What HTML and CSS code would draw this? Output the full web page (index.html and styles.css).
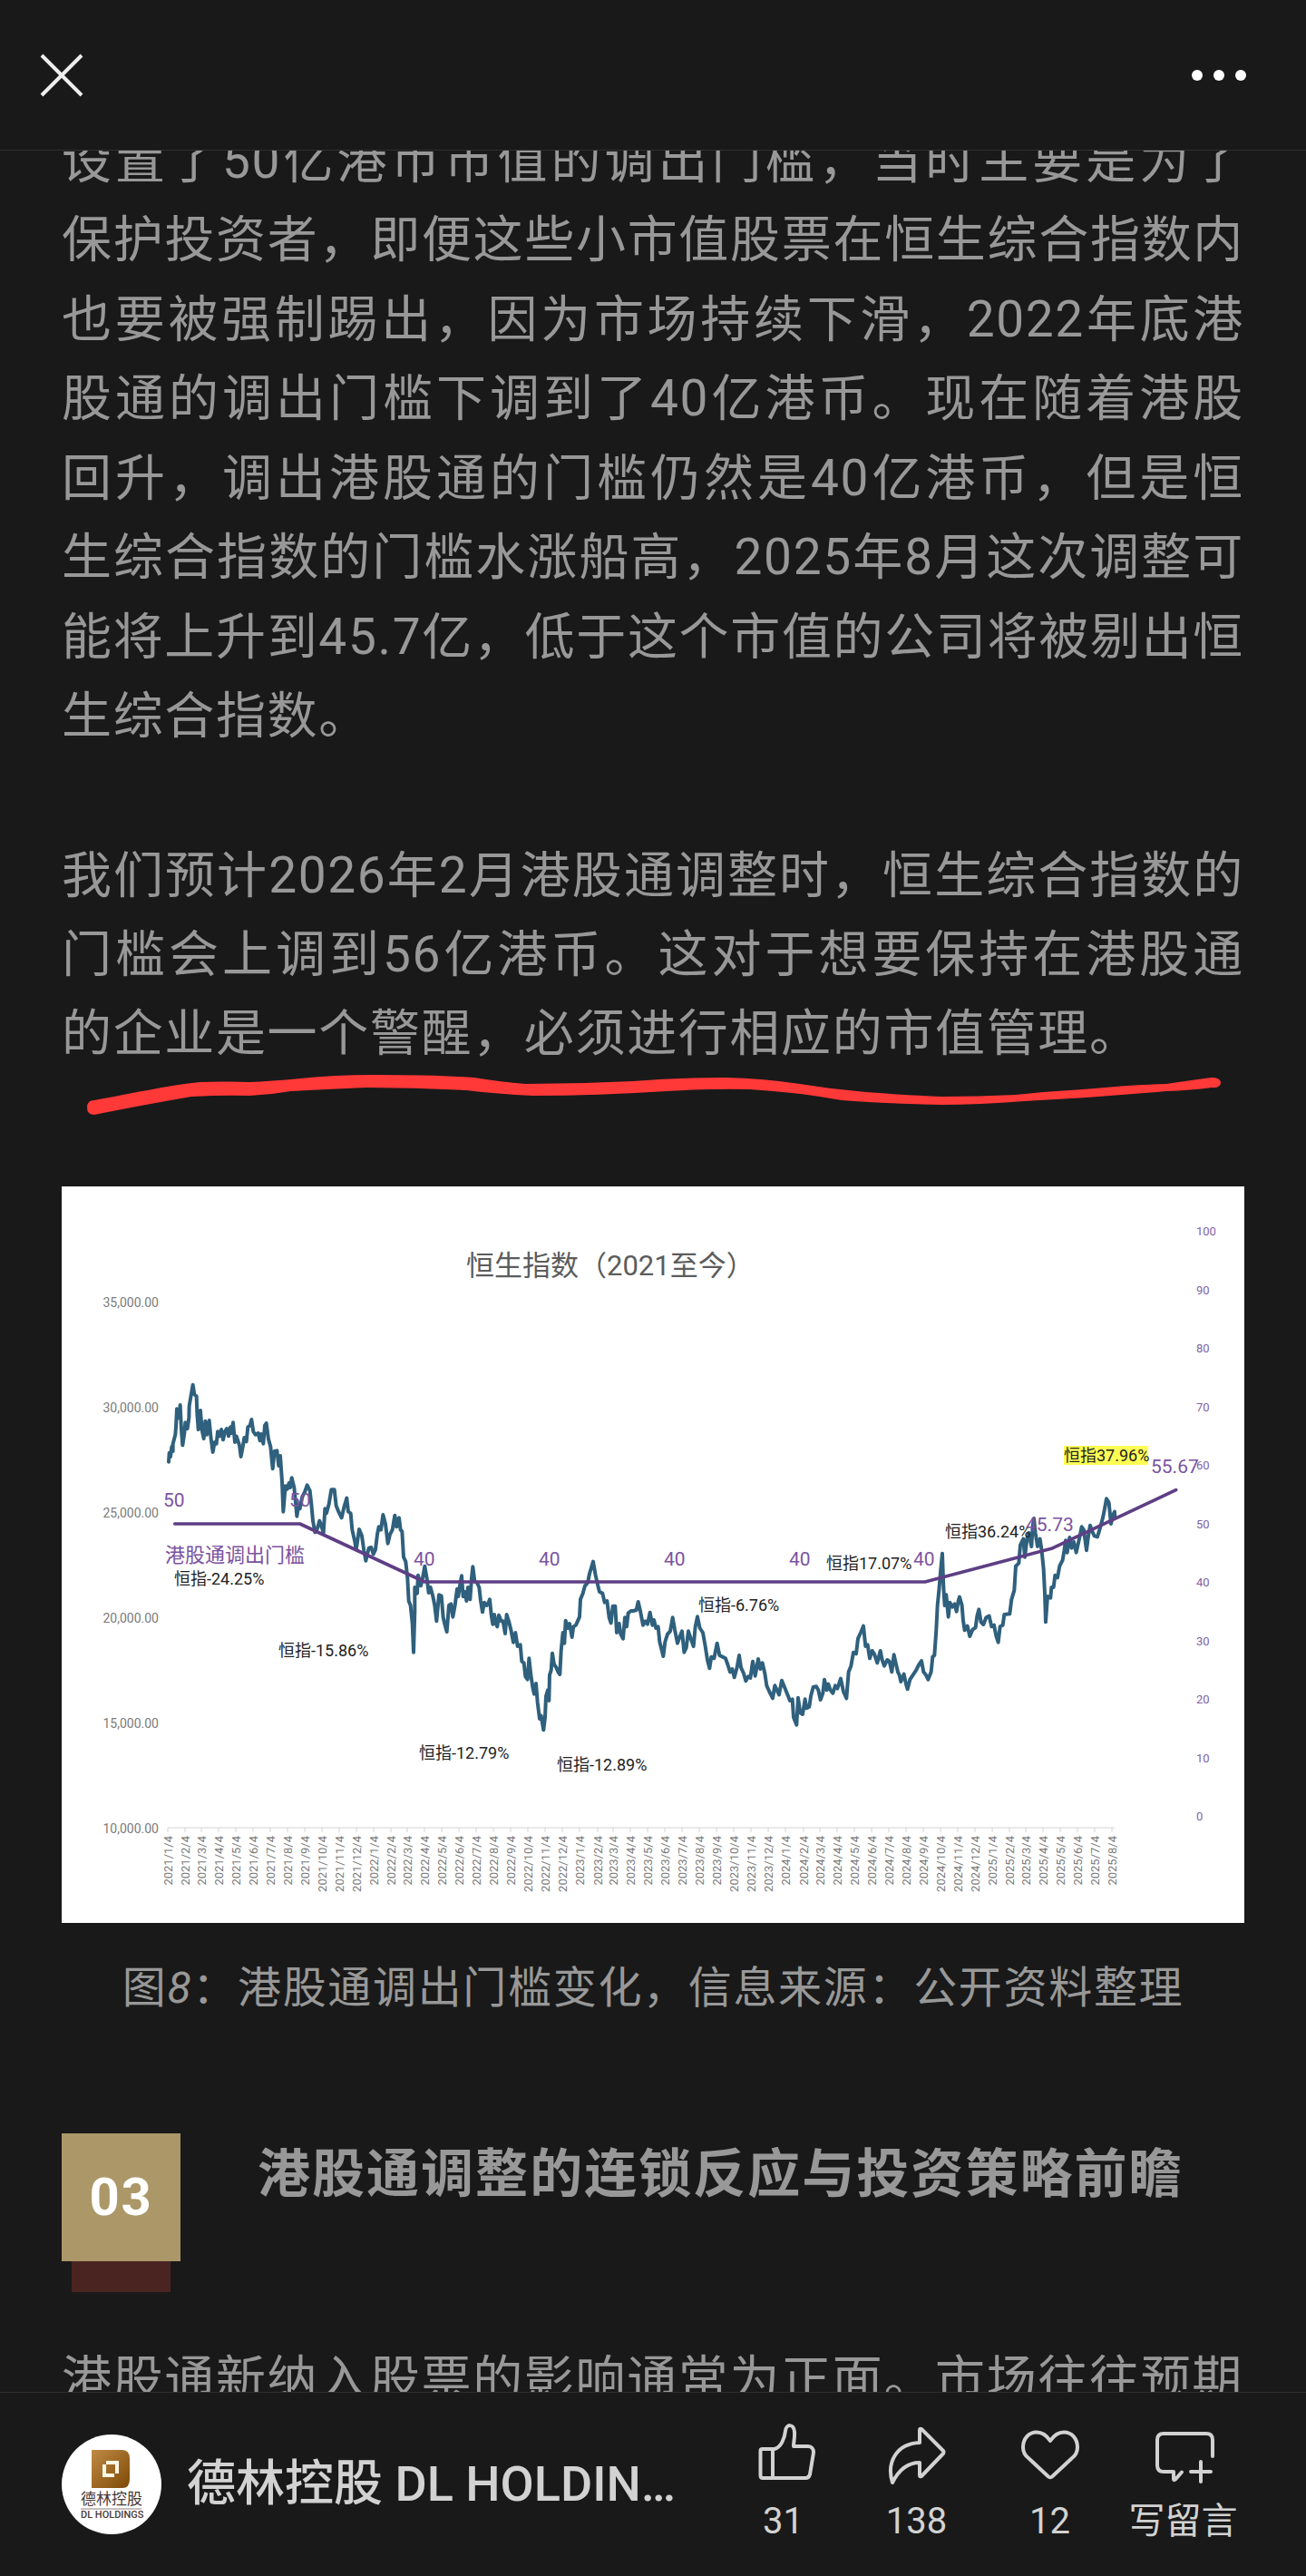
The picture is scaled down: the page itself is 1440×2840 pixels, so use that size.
FILE: index.html
```html
<!DOCTYPE html>
<html lang="zh-CN">
<head>
<meta charset="utf-8">
<meta name="viewport" content="width=device-width, initial-scale=1">
<title>港股通调整</title>
<link rel="stylesheet" href="styles.css">
</head>
<body>
<header class="topbar">
  <button class="icon-button" type="button" aria-label="关闭">
    <svg class="close-icon" viewBox="0 0 48 48"><path d="M2 2L46 46M46 2L2 46"/></svg>
  </button>
  <button class="icon-button" type="button" aria-label="更多">
    <svg class="more-icon" viewBox="0 0 60 12"><circle cx="6" cy="6" r="6"/><circle cx="30" cy="6" r="6"/><circle cx="54" cy="6" r="6"/></svg>
  </button>
</header>

<main class="reader">
  <article class="article">
    <p class="paragraph">设置了50亿港币市值的调出门槛，当时主要是为了保护投资者，即便这些小市值股票在恒生综合指数内也要被强制踢出，因为市场持续下滑，2022年底港股通的调出门槛下调到了40亿港币。现在随着港股回升，调出港股通的门槛仍然是40亿港币，但是恒生综合指数的门槛水涨船高，2025年8月这次调整可能将上升到45.7亿，低于这个市值的公司将被剔出恒生综合指数。</p>
    <div class="marked">
      <p class="paragraph">我们预计2026年2月港股通调整时，恒生综合指数的门槛会上调到56亿港币。这对于想要保持在港股通的企业是一个警醒，必须进行相应的市值管理。</p>
      <svg class="marker" viewBox="0 0 1304 60" aria-hidden="true">
        <path d="M36 29C70 23 120 12 152 9Q175 8 207 9Q230 8 263 5Q300 1 345 1Q410 1 455 4Q485 9 511 11Q570 11 630 8Q680 4 731 4Q775 5 814 11Q850 17 887 20Q925 23 970 25Q1010 25 1052 23Q1090 19 1126 17Q1180 12 1218 11Q1245 7 1268 4Q1277 4 1278 9Q1278 16 1268 15Q1245 18 1218 19Q1140 26 1062 30Q1010 34 970 34Q910 33 860 29Q810 20 759 17Q715 16 667 19Q590 24 520 24Q480 22 446 18Q390 15 336 15Q290 17 253 19Q230 23 207 24Q180 23 143 25Q80 36 36 45Q28 45 28 37Q28 29 36 29Z"/>
      </svg>
    </div>

    <figure class="figure">
      <svg class="chart" viewBox="0 0 1304 812" role="img" aria-label="恒生指数（2021至今）">
        <text class="chart-title" x="446" y="98">恒生指数（2021至今）</text>
        <g class="axis" id="index-axis"></g>
        <g class="axis" id="date-axis"></g>
        <g class="axis axis-right" id="threshold-axis"></g>
        <g transform="translate(-8 -8) scale(.33333)">
          <path class="index-line" id="index-line"/>
          <path class="threshold-line" d="M398 1140H812L1225 1332H2880L3298 1222L3710 1028"/>
        </g>
        <rect class="highlight" x="1105" y="286" width="93" height="21"/>
        <g class="threshold-labels">
          <text x="112" y="353">50</text>
          <text x="251" y="353">50</text>
          <text x="388" y="418">40</text>
          <text x="526" y="418">40</text>
          <text x="664" y="418">40</text>
          <text x="802" y="418">40</text>
          <text x="939" y="418">40</text>
          <text x="1063" y="380">45.73</text>
          <text x="1201" y="316">55.67</text>
          <text class="series-name" x="114" y="414">港股通调出门槛</text>
        </g>
        <g class="index-labels">
          <text x="124" y="439">恒指-24.25%</text>
          <text x="239" y="518">恒指-15.86%</text>
          <text x="394" y="631">恒指-12.79%</text>
          <text x="546" y="644">恒指-12.89%</text>
          <text x="702" y="468">恒指-6.76%</text>
          <text x="843" y="422">恒指17.07%</text>
          <text x="974" y="387">恒指36.24%</text>
          <text x="1105" y="303">恒指37.96%</text>
        </g>
      </svg>
      <figcaption class="caption">图<em>8</em>：港股通调出门槛变化，信息来源：公开资料整理</figcaption>
    </figure>

    <section class="section-head">
      <div class="badge">
        <span class="badge-number">03</span>
        <span class="badge-base"></span>
      </div>
      <h2 class="section-title">港股通调整的连锁反应与投资策略前瞻</h2>
    </section>
    <p class="paragraph">港股通新纳入股票的影响通常为正面。市场往往预期</p>
  </article>
</main>

<footer class="bottombar">
  <a class="account" href="#account">
    <svg class="avatar" viewBox="0 0 110 110" aria-hidden="true">
      <defs><linearGradient id="gold" x1="0" y1="0" x2="1" y2="1"><stop offset="0" stop-color="#c08a45"/><stop offset="1" stop-color="#7d4a05"/></linearGradient></defs>
      <circle cx="55" cy="55" r="55" fill="#fff"/>
      <path fill="url(#gold)" d="M33 17H67Q75 17 75 27V49Q75 59 67 59H33Z"/>
      <path fill="none" stroke="#fff8e6" stroke-width="4" d="M49 31H61V43M58 45H47V33"/>
      <text class="logo-name" x="21" y="77">德林控股</text>
      <path stroke="#8d7f7a" d="M21 82H88"/>
      <text class="logo-latin" x="21" y="92">DL HOLDINGS</text>
    </svg>
    <span class="account-name">德林控股 DL HOLDIN…</span>
  </a>
  <div class="actions">
    <button class="action" type="button">
      <svg class="action-icon" viewBox="0 0 72 68"><path d="M12.500 28H26C33 26 37 17 38 8C39 0 47 0 48 9C48.500 15 47 20 47 25H63C67 25 69 28 69 32L65 56Q64 60 60 60H13Q10.500 60 10.500 57V30Q10.500 28 12.500 28ZM24 28V60"/></svg>
      <span>31</span>
    </button>
    <button class="action" type="button">
      <svg class="action-icon" viewBox="0 0 72 68"><path d="M39 21V7Q39 5 41 6L65 30Q66 31 65 33L41 58Q39 59 39 57V43C25 43 16 51 9 65C2 42 14 22 39 21Z"/></svg>
      <span>138</span>
    </button>
    <button class="action" type="button">
      <svg class="action-icon" viewBox="0 0 72 68"><path d="M36 19C32 13 28 9.500 21 9.500C12 9.500 6 17 6 26C6 31 8 35 12 38L34 58.500Q36 60 38 58.500L60 38C64 35 66 31 66 26C66 17 60 9.500 51 9.500C44 9.500 40 13 36 19Z"/></svg>
      <span>12</span>
    </button>
    <button class="action" type="button">
      <svg class="action-icon" viewBox="0 0 72 68"><path d="M68 36V18Q68 11 61 11H14Q7 11 7 18V46Q7 53 14 53H25V61Q25 63 27 61.500L34 53.500M44 53H66M55 42V64"/></svg>
      <span>写留言</span>
    </button>
  </div>
</footer>
<script src="chart.js"></script>
</body>
</html>
```
FILE: styles.css
```css
* { box-sizing: border-box; }

body {
  margin: 0;
  height: 100vh;
  display: flex;
  flex-direction: column;
  background: #191919;
  color: #989898;
  font-family: Roboto, "Noto Sans CJK SC", sans-serif;
}

button {
  padding: 0;
  border: 0;
  background: none;
  color: inherit;
  font: inherit;
}

.topbar {
  flex: none;
  height: 166px;
  padding: 0 66px 0 44px;
  display: flex;
  align-items: center;
  justify-content: space-between;
  border-bottom: 1px solid #303030;
}

.icon-button { display: flex; }
.close-icon { width: 48px; height: 48px; fill: none; stroke: #eee; stroke-width: 4; }
.more-icon { width: 60px; height: 12px; fill: #fff; }

.reader {
  flex: 1;
  min-height: 0;
  overflow: hidden;
}

/* The article is scrolled part of a line under the top bar. */
.article {
  margin-top: -32px;
  padding: 0 68px;
}

.paragraph {
  margin: 0;
  font-size: 55px;
  line-height: 1.59;
  letter-spacing: .03em;
  text-align: justify;
}

.marked {
  position: relative;
  margin-top: 88px;
}

.marker {
  position: absolute;
  top: 100%;
  left: 0;
  width: 100%;
  fill: #ff3838;
}

.figure { margin: 124px 0 0; }

.chart {
  display: block;
  width: 100%;
  background: #fff;
}

.chart-title { font-size: 31px; fill: #5c5c5c; }
.axis { font-size: 14px; fill: #7b7b7b; }
.axis path { fill: none; stroke: #d4d4d4; stroke-width: 1; }
.axis-right { font-size: 13px; fill: #8262a5; }
.date-label { font-size: 13px; }
.end { text-anchor: end; }
.index-line { fill: none; stroke: #2f607d; stroke-width: 12; stroke-linejoin: round; stroke-linecap: round; }
.threshold-line { fill: none; stroke: #5e3f85; stroke-width: 11; stroke-linejoin: round; stroke-linecap: round; }
.highlight { fill: #ffff55; }
.threshold-labels { font-size: 21px; fill: #7b53a0; }
.series-name { font-size: 22px; }
.index-labels { font-size: 18px; fill: #222; }

.caption {
  margin-top: 32px;
  font-size: 48px;
  line-height: 80px;
  letter-spacing: .035em;
  text-align: center;
}

.section-head {
  margin: 120px 0 53px;
  display: flex;
  align-items: flex-start;
  gap: 85px;
}

.badge {
  width: 131px;
  display: flex;
  flex-direction: column;
  align-items: center;
}

.badge-number {
  width: 100%;
  background: #ac9768;
  color: #fff;
  font: bold 58px/141px Roboto, sans-serif;
  letter-spacing: .03em;
  text-align: center;
}

.badge-base {
  width: 109px;
  height: 34px;
  background: #4a2421;
}

.section-title {
  margin: 0;
  font-size: 58px;
  line-height: 90px;
  letter-spacing: .035em;
}

.bottombar {
  flex: none;
  height: 203px;
  padding: 0 62px 0 68px;
  display: flex;
  justify-content: space-between;
  border-top: 1px solid #303030;
  color: #d2d2d2;
}

.account {
  width: 700px;
  padding-top: 46px;
  display: flex;
  align-items: flex-start;
  gap: 28px;
  color: inherit;
  text-decoration: none;
}

.avatar { flex: none; width: 110px; height: 110px; }
.logo-name { font-size: 17px; fill: #4a3a36; }
.logo-latin { font-size: 11px; font-weight: 500; fill: #4a3a36; }

.account-name {
  min-width: 0;
  overflow: hidden;
  text-overflow: ellipsis;
  white-space: nowrap;
  font-size: 54px;
  font-weight: 500;
  line-height: 110px;
}

.actions {
  padding-top: 34px;
  display: grid;
  grid-template-columns: repeat(4, 147px);
}

.action {
  display: flex;
  flex-direction: column;
  align-items: center;
  gap: 16px;
  font-size: 40px;
  line-height: 48px;
}

.action-icon {
  width: 72px;
  height: 68px;
  fill: none;
  stroke: #d2d2d2;
  stroke-width: 4;
  stroke-linecap: round;
  stroke-linejoin: round;
}
```
FILE: chart.js
```js
const runs = [
  [0, 0, "378,935 380,905 384,918 388,885 392,900 392,875 400,845 402,820 405,760 412,790 416,747 420,830 424,880 430,840 433,805 440,825 445,790 446,750 452,715 458,680 463,712 470,718 472,775 476,828 483,765 488,830 494,858 499,800 504,845 512,798 517,850 524,903 530,870 536,875 540,835 546,850 552,828 558,862 564,835 570,825 576,850 582,820 586,840 591,805 597,870 602,850 608,868 612,880 617,918 624,880 628,855 635,868 640,820 647,815 652,795 658,835 665,845 674,840 680,865 684,843 691,875 696,815 701,807 708,860 715,885 722,958 728,900 736,898 742,948 747,915 753,1000 757,1100 764,1015 770,1025 776,1005 780,1020 785,988 793,1020 797,1060 802,1115 808,1075 812,1090 820,1050 828,1035 836,1012 845,1030 850,1075 855,1130 862,1168 870,1155 877,1130 884,1150 890,1170 895,1090 900,1105 908,1075 916,1027 926,1027 932,1080 940,1100 950,1120 958,1085 967,1055 972,1100 980,1105 985,1160 994,1200 998,1225 1002,1200 1008,1158 1017,1180 1024,1230 1030,1262 1040,1220 1048,1218 1055,1240 1062,1225 1068,1175 1073,1150 1080,1160 1087,1110 1095,1140 1103,1205 1110,1175 1118,1160 1126,1112 1132,1150 1140,1120 1145,1160 1150,1165 1155,1250 1162,1265 1168,1320 1172,1395 1178,1410 1184,1470 1188,1565 1192,1430 1192,1350 1200,1370 1203,1310 1212,1345 1218,1320 1225,1280 1232,1320 1238,1368 1244,1350 1252,1380 1258,1410 1264,1462 1272,1375 1280,1378 1286,1450 1292,1475 1298,1497 1305,1410 1312,1405 1318,1448 1325,1410 1332,1355 1336,1380 1342,1340 1347,1312 1352,1380 1358,1365 1363,1395 1368,1350 1375,1390 1380,1320 1384,1282 1390,1330 1398,1335 1405,1350 1410,1395 1416,1432 1422,1400 1430,1410 1436,1400"],
  [1440, 1200, "0,190 5,240 10,272 15,240 20,270 25,280 30,242 38,262 44,262 51,303 56,240 63,262 70,290 78,332 85,300 92,345 101,340 106,395 113,400 118,445 125,455 130,385 136,440 142,480 147,503 153,468 158,530 165,585 170,575 178,622 183,580 186,510 192,490 196,525 198,440 203,425 207,368 213,405 220,415 226,430 232,438 236,360 242,300 247,335 251,260 258,285 264,270 272,315 277,280 285,275 297,248 300,190 308,170 315,145 324,135 330,105 342,65 350,110 358,145 363,165 373,170 380,200 388,195 395,250 401,268 407,212 415,212 420,300 428,270 433,305 441,320 447,250 453,280 458,235 467,228 475,228 485,225 491,198 498,228 507,275 515,262 522,272 530,233 538,275 543,258 550,285 557,280 562,330 574,378 580,330 588,305 597,295 605,250 612,290 621,335 628,315 636,295 643,365 650,350 657,295 665,320 674,345 680,280 687,247 695,285 705,300 713,345 720,390 727,418 733,380 742,385 752,335 760,375 770,380 780,385 787,405 795,430 802,420 809,448 818,415 825,375 831,415 840,435 847,460 855,445 862,450 870,395 878,443 888,387 895,420 902,400 910,435 916,475 925,495 936,517 943,475 950,490 957,505 966,458 975,480 985,505 993,525 1001,520 1005,580 1015,605 1020,515 1027,565 1035,570 1043,520 1048,550 1057,545 1062,510 1070,480 1080,478 1087,490 1094,522 1102,500 1107,455 1115,490 1120,470 1127,490 1135,500 1143,475 1150,485 1161,452 1170,495 1180,517 1187,430 1195,410 1203,365 1212,370 1218,320 1227,300 1236,278 1243,345 1250,340 1257,385"],
  [2700, 1200, "5,360 12,370 22,400 32,360 38,390 45,410 55,390 62,395 70,430 77,373 83,400 90,430 95,440 100,462 110,437 117,470 122,487 130,455 140,440 150,425 160,405 168,393 175,430 183,440 190,455 200,430 205,380 211,375 217,290 221,210 226,160 232,90 237,38 241,150 245,210 250,175 257,248 262,200 270,215 278,205 284,230 290,195 294,182 302,210 306,260 311,292 320,278 328,312 337,290 347,283 352,245 358,223 365,265 373,273 382,250 392,245 400,280 408,275 415,310 422,332 428,280 437,275 442,240 460,238 466,190 475,160 480,80 490,70"],
  [2700, 0, "495,1210 505,1190 510,1250 517,1190 523,1170 532,1215 536,1150 540,1122 545,1170 552,1215 560,1190 566,1230 572,1290 576,1370 579,1465 585,1380 595,1385 598,1350 605,1350 610,1310 618,1318 625,1280 635,1260 640,1230 645,1195 650,1235 658,1185 665,1220 672,1200 680,1235 690,1190 698,1150 705,1160 714,1228 720,1180 726,1145 733,1165 740,1180 750,1183 760,1150 768,1120 774,1090 780,1057 788,1070 795,1140 802,1110 807,1100 808,1115"]
];

const points = runs.flatMap(([dx, dy, run]) =>
  run.split(" ").map(pair => {
    const [x, y] = pair.split(",").map(Number);
    return `${x + dx} ${y + dy}`;
  })
);
document.getElementById("index-line").setAttribute("d", "M" + points.join("L"));

const label = (x, y, text, attrs = "") => `<text x="${x}" y="${y}" ${attrs}>${text}</text>`;

document.getElementById("index-axis").innerHTML =
  ["35,000.00", "30,000.00", "25,000.00", "20,000.00", "15,000.00", "10,000.00"]
    .map((text, i) => label(107, 133 + i * 116, text, 'class="end"')).join("");

document.getElementById("threshold-axis").innerHTML =
  Array.from({ length: 11 }, (_, i) => label(1251, Math.round(54 + i * 64.5), 100 - i * 10)).join("");

// One tick on the 4th of each month, placed by its date.
const start = Date.UTC(2021, 0, 4);
const end = Date.UTC(2025, 7, 4);
let ticks = "M117 707H1161";
let dates = "";
for (let m = 0; m <= 55; m++) {
  const year = 2021 + Math.floor(m / 12);
  const x = Math.round(117 + (Date.UTC(year, m % 12, 4) - start) / (end - start) * 1041);
  ticks += `M${x} 707v5`;
  dates += label(0, 0, `${year}/${m % 12 + 1}/4`, `class="date-label end" transform="translate(${x + 5} 716) rotate(-90)"`);
}
document.getElementById("date-axis").innerHTML = `<path d="${ticks}"/>${dates}`;
```
